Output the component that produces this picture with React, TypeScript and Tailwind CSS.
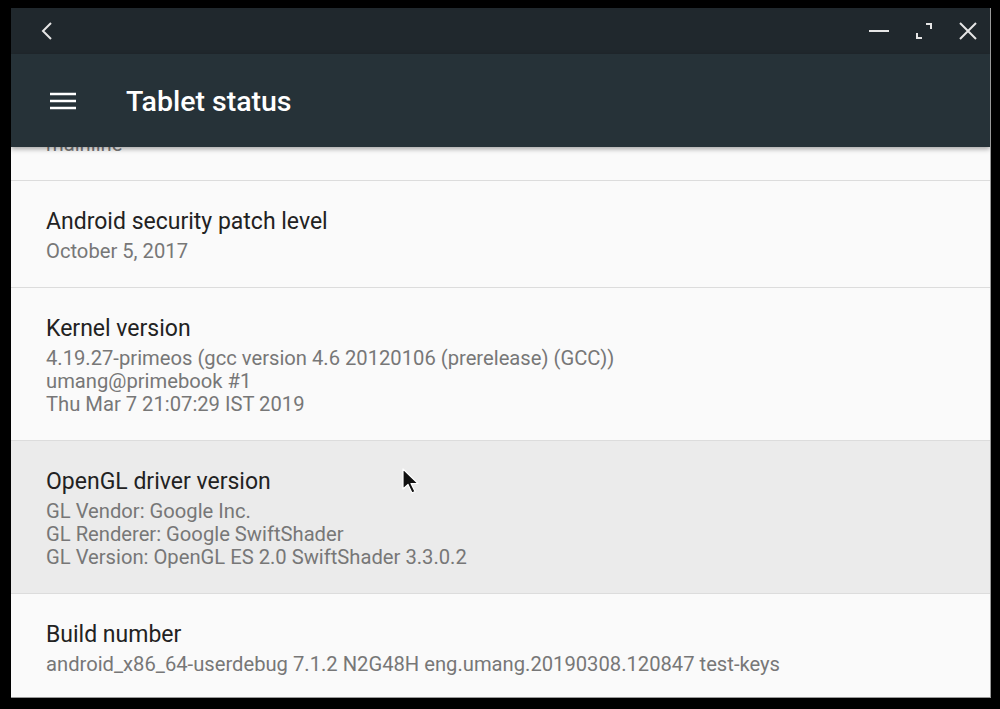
import React from 'react';

type Item = { title: string; lines: string[]; active?: boolean };

const items: Item[] = [
  { title: 'Baseband version', lines: ['mainline'] },
  { title: 'Android security patch level', lines: ['October 5, 2017'] },
  {
    title: 'Kernel version',
    lines: [
      '4.19.27-primeos (gcc version 4.6 20120106 (prerelease) (GCC))',
      'umang@primebook #1',
      'Thu Mar 7 21:07:29 IST 2019',
    ],
  },
  {
    title: 'OpenGL driver version',
    lines: ['GL Vendor: Google Inc.', 'GL Renderer: Google SwiftShader', 'GL Version: OpenGL ES 2.0 SwiftShader 3.3.0.2'],
    active: true,
  },
  {
    title: 'Build number',
    lines: ['android_x86_64-userdebug 7.1.2 N2G48H eng.umang.20190308.120847 test-keys'],
  },
];

function Row({ item, first }: { item: Item; first?: boolean }) {
  return (
    <div
      className={`relative border-b border-[#dcdcdc] pl-[35px] pt-[28px] pb-[24px] ${item.active ? 'bg-[#ebebeb]' : ''} ${first ? '-mt-[73px]' : ''}`}
    >
      <div className="text-[23px] leading-[26px] text-[#222222]">{item.title}</div>
      <div className="mt-[5px]">
        {item.lines.map((l) => (
          <div key={l} className="text-[20.2px] leading-[23px] text-[#777777]">
            {l}
          </div>
        ))}
      </div>
      {item.active && (
        <svg className="absolute left-[390px] top-[26px]" width="20" height="32" viewBox="0 0 20 32">
          <path d="M2 2 L2 22 L7 17.5 L11 26 L14 24.5 L10 16.5 L17 16.5 Z" fill="#111" stroke="#fff" strokeWidth="1.2" strokeLinejoin="round" />
        </svg>
      )}
    </div>
  );
}

export default function App() {
  return (
    <div className="w-[1000px] h-[709px] bg-black pt-[8px] pl-[11px]" style={{ fontFamily: 'Roboto, "Noto Sans", sans-serif' }}>
      <div className="w-[980px] h-[690px] flex flex-col overflow-hidden bg-[#fafafa] border-r border-b border-[#9a9a9a]">
        {/* Window caption */}
        <div className="h-[46px] bg-[#20282d] flex items-center justify-between pl-[29px] pr-[12px] flex-shrink-0">
          <svg width="14" height="20" viewBox="0 0 14 20" fill="none" stroke="#e6e6e6" strokeWidth="2">
            <path d="M11 2 L3 10 L11 18" />
          </svg>
          <div className="flex items-center gap-[24px]">
            <svg width="22" height="20" viewBox="0 0 22 20" stroke="#e6e6e6" strokeWidth="2">
              <path d="M1 10 H21" />
            </svg>
            <svg width="20" height="20" viewBox="0 0 20 20" fill="none" stroke="#e6e6e6" strokeWidth="2">
              <path d="M12 3 H17 V8 M3 12 V17 H8" />
            </svg>
            <svg width="20" height="20" viewBox="0 0 20 20" stroke="#e6e6e6" strokeWidth="2">
              <path d="M2 2 L18 18 M18 2 L2 18" />
            </svg>
          </div>
        </div>
        {/* App bar */}
        <div className="relative z-10 h-[93px] bg-[#263238] flex items-center flex-shrink-0 shadow-[0_2px_5px_rgba(0,0,0,0.35)]">
          <svg className="ml-[39px]" width="26" height="18" viewBox="0 0 26 18" stroke="#ffffff" strokeWidth="2.6">
            <path d="M0 2 H26 M0 9 H26 M0 16 H26" />
          </svg>
          <div className="ml-[50px] pt-[3px] text-[28.5px] font-medium text-white">Tablet status</div>
        </div>
        {/* List */}
        <div className="flex-1 overflow-hidden">
          {items.map((it, i) => (
            <Row key={it.title} item={it} first={i === 0} />
          ))}
        </div>
      </div>
    </div>
  );
}
